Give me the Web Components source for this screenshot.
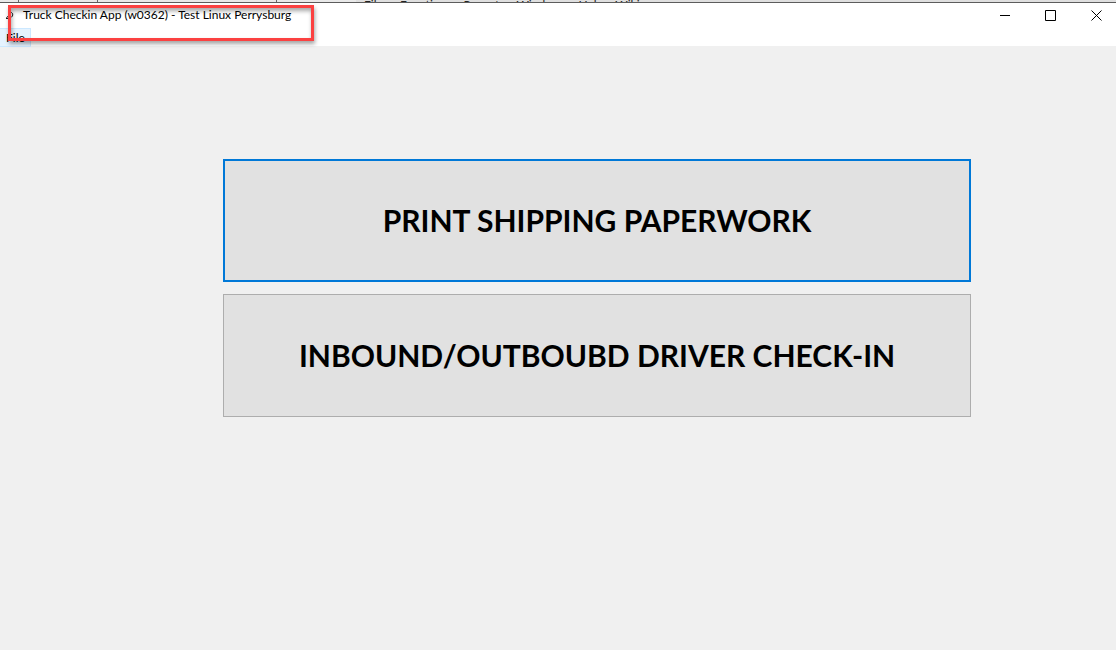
<!DOCTYPE html>
<html lang="en">
<head>
<meta charset="utf-8">
<title>Truck Checkin App</title>
<style>
html, body { height: 100%; margin: 0; }
body { background: #f0f0f0; color: #000; font: 12px/16px Lato, "Open Sans", sans-serif; overflow: hidden; }
</style>
</head>
<body>
<checkin-app></checkin-app>
<script>
const define = (name, html) => {
  const template = document.createElement("template");
  template.innerHTML = html;
  customElements.define(name, class extends HTMLElement {
    constructor() {
      super();
      this.attachShadow({ mode: "open" }).append(template.content.cloneNode(true));
    }
  });
};

/* Sliver of the window behind: tabs on the left, its menu on the right */
define("back-window", `
<style>
:host { display: flex; height: 2px; overflow: hidden; background: #dfdfdf; border-bottom: 1px solid #5c5c5c; }
.tabs { flex: none; display: grid; grid-template-columns: 18px 78px 178px 79px; column-gap: 1px; background: #666; }
.tabs i { background: #e9e9e9; }
nav { display: flex; gap: 12px; padding-left: 8px; height: 16px; margin-top: -3px; color: #222; }
</style>
<div class="tabs"><i></i><i></i><i></i><i></i></div>
<nav><span>Files</span><span>Functions</span><span>Reports</span><span>Windows</span><span>Help</span><span>Wiki</span></nav>`);

define("window-controls", `
<style>
:host { display: flex; gap: 5px; }
button { width: 40px; height: 25px; padding: 0; border: 0; background: none; display: grid; place-items: center; }
svg { display: block; fill: none; stroke: #000; }
</style>
<button aria-label="Minimize"><svg width="12" height="11"><path d="M0 5.5H10"/></svg></button>
<button aria-label="Maximize"><svg width="12" height="11"><path d="M.5 .5H10.5V10.5H.5Z"/></svg></button>
<button aria-label="Close"><svg width="12" height="11"><path d="M1.5 .5L11.5 10.5M11.5 .5L1.5 10.5"/></svg></button>`);

define("title-bar", `
<style>
:host { display: flex; align-items: center; height: 25px; background: #fff; }
svg { flex: none; margin: 0 9px 0 6px; }
h1 { flex: 1; margin: 0; padding-bottom: 2px; font: inherit; white-space: nowrap; }
</style>
<svg width="8" height="10" fill="none" stroke="#222"><path d="M2 1.5H5.5Q7.5 2.5 6.5 5L5 6.5M3 4L0 7.5H3"/></svg>
<h1><slot></slot></h1>
<window-controls></window-controls>`);

define("menu-bar", `
<style>
:host { display: flex; height: 18px; background: #fff; }
button { height: 19px; width: 31px; padding: 0 0 0 6px; border: 1px solid #cce8ff; border-left: 0; background: #e5f3ff; font: inherit; line-height: 17px; text-align: left; }
</style>
<button><slot></slot></button>`);

define("action-button", `
<style>
:host { display: block; }
button { display: block; width: 100%; height: 123px; padding: 0 16px 2px; border: 1px solid #adadad; background: #e1e1e1; color: #000; font: bold 30px/40px Lato, "Open Sans", sans-serif; }
:host([default]) button { border: 2px solid #0078d7; }
</style>
<button><slot></slot></button>`);

/* Red frame calling out the title */
define("callout-frame", `
<style>
:host { position: absolute; left: 8px; top: 5px; width: 300px; height: 30px; border: 3px solid #fb4141; pointer-events: none; box-shadow: 1px 3px 4px rgba(0,0,0,.35), inset 1px 3px 4px rgba(0,0,0,.35); }
</style>`);

define("checkin-app", `
<style>
:host { display: block; position: relative; }
main { display: grid; gap: 12px; padding: 113px 13% 24px 20%; }
</style>
<back-window></back-window>
<title-bar>Truck Checkin App (w0362) - Test Linux Perrysburg</title-bar>
<menu-bar>File</menu-bar>
<main>
<action-button default>PRINT SHIPPING PAPERWORK</action-button>
<action-button>INBOUND/OUTBOUBD DRIVER CHECK-IN</action-button>
</main>
<callout-frame></callout-frame>`);
</script>
</body>
</html>
